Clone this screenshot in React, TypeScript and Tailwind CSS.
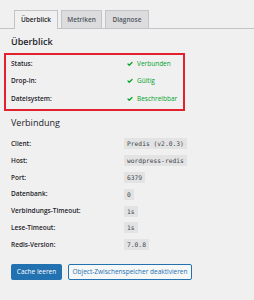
import { Check } from "lucide-react"

const status = [
  { label: "Status:", value: "Verbunden" },
  { label: "Drop-in:", value: "Gültig" },
  { label: "Dateisystem:", value: "Beschreibbar" },
]

const connection = [
  { label: "Client:", value: "Predis (v2.0.3)" },
  { label: "Host:", value: "wordpress-redis" },
  { label: "Port:", value: "6379" },
  { label: "Datenbank:", value: "0" },
  { label: "Verbindungs-Timeout:", value: "1s" },
  { label: "Lese-Timeout:", value: "1s" },
  { label: "Redis-Version:", value: "7.0.8" },
]

export default function App() {
  return (
    <div className="w-[254px] h-[300px] bg-[#f0f0f1] text-[#1d2327] font-['Open_Sans',sans-serif] overflow-hidden">
      {/* tabs */}
      <div className="flex items-end gap-[3px] pl-[14px] pt-[10px] border-b border-[#c3c4c7]">
        <div className="h-[19px] w-[44px] -mb-px flex items-center justify-center border border-b-0 border-[#c3c4c7] bg-[#f0f0f1] text-[6.5px] font-semibold">
          Überblick
        </div>
        <div className="h-[18px] w-[41px] flex items-center justify-center border border-b-0 border-[#c3c4c7] bg-[#dcdcde] text-[6.5px] font-semibold text-[#50575e]">
          Metriken
        </div>
        <div className="h-[18px] w-[44px] flex items-center justify-center border border-b-0 border-[#c3c4c7] bg-[#dcdcde] text-[6.5px] font-semibold text-[#50575e]">
          Diagnose
        </div>
      </div>

      <h2 className="pl-[11px] mt-[7px] text-[9px] font-semibold leading-[12px]">Überblick</h2>

      {/* status table */}
      <div className="ml-[4px] mt-[5px] w-[181px] border-2 border-[#e3202e] pb-[1.5px]">
        {status.map((row) => (
          <div key={row.label} className="flex items-center h-[17.5px] text-[6.5px]">
            <div className="w-[121px] pl-[5px] font-semibold">{row.label}</div>
            <div className="flex items-center gap-[4px] text-[#00a32a]">
              <Check className="w-[6px] h-[6px]" strokeWidth={5} />
              {row.value}
            </div>
          </div>
        ))}
      </div>

      <h2 className="pl-[11px] mt-[6px] text-[9px] leading-[12px]">Verbindung</h2>

      {/* connection table */}
      <div className="mt-[6.5px]">
        {connection.map((row) => (
          <div key={row.label} className="flex items-center h-[16.8px] text-[6.5px]">
            <div className="w-[124px] pl-[11px] font-semibold">{row.label}</div>
            <code className="bg-[#e3e3e4] px-[3px] py-[1px] text-[6.3px] leading-[9px] font-['DejaVu_Sans_Mono',monospace] text-[#3c434a]">
              {row.value}
            </code>
          </div>
        ))}
      </div>

      {/* buttons */}
      <div className="flex gap-[6px] pl-[11px] mt-[11px]">
        <button className="h-[16px] w-[51px] rounded-[2px] bg-[#2271b1] text-white text-[6.5px] whitespace-nowrap">
          Cache leeren
        </button>
        <button className="h-[16px] w-[124px] rounded-[2px] border border-[#2271b1] bg-[#f6f7f7] text-[#2271b1] text-[6.5px] whitespace-nowrap">
          Object-Zwischenspeicher deaktivieren
        </button>
      </div>
    </div>
  )
}
